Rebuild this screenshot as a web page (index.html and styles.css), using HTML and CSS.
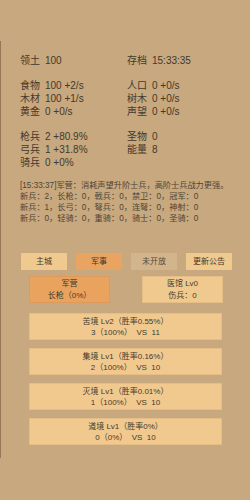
FILE: index.html
```html
<!DOCTYPE html>
<html lang="zh">
<head>
<meta charset="utf-8">
<title>领土</title>
<link rel="stylesheet" href="styles.css">
</head>
<body>
<div class="panel">
  <div class="stats group-first">
    <div class="stat"><span class="lbl">领土</span><span>100</span></div>
    <div class="stat"><span class="lbl">存档</span><span>15:33:35</span></div>
  </div>
  <div class="stats group">
    <div class="stat"><span class="lbl">食物</span><span>100 +2/s</span></div>
    <div class="stat"><span class="lbl">人口</span><span>0 +0/s</span></div>
    <div class="stat"><span class="lbl">木材</span><span>100 +1/s</span></div>
    <div class="stat"><span class="lbl">树木</span><span>0 +0/s</span></div>
    <div class="stat"><span class="lbl">黄金</span><span>0 +0/s</span></div>
    <div class="stat"><span class="lbl">声望</span><span>0 +0/s</span></div>
  </div>
  <div class="stats group">
    <div class="stat"><span class="lbl">枪兵</span><span>2 +80.9%</span></div>
    <div class="stat"><span class="lbl">圣物</span><span>0</span></div>
    <div class="stat"><span class="lbl">弓兵</span><span>1 +31.8%</span></div>
    <div class="stat"><span class="lbl">能量</span><span>8</span></div>
    <div class="stat"><span class="lbl">骑兵</span><span>0 +0%</span></div>
  </div>
  <div class="log">
    <div>[15:33:37]军营：消耗声望升阶士兵，高阶士兵战力更强。</div>
    <div>新兵：2，长枪：0，戟兵：0，禁卫：0，冠军：0</div>
    <div>新兵：1，长弓：0，弩兵：0，连弩：0，神射：0</div>
    <div>新兵：0，轻骑：0，重骑：0，骑士：0，圣骑：0</div>
  </div>
  <div class="tabs">
    <div class="tab">主城</div>
    <div class="tab active">军事</div>
    <div class="tab disabled">未开放</div>
    <div class="tab">更新公告</div>
  </div>
  <div class="buildings">
    <div class="bld active"><div>军营</div><div>长枪（0%）</div></div>
    <div class="bld"><div>医馆 Lv0</div><div>伤兵：0</div></div>
  </div>
  <div class="cards">
    <div class="card"><div>苦境 Lv2（胜率0.55%）</div><div>3（100%）  VS  11</div></div>
    <div class="card"><div>集境 Lv1（胜率0.16%）</div><div>2（100%）  VS  10</div></div>
    <div class="card"><div>灭境 Lv1（胜率0.01%）</div><div>1（100%）  VS  10</div></div>
    <div class="card"><div>道境 Lv1（胜率0%）</div><div>0（0%）  VS  10</div></div>
  </div>
</div>
</body>
</html>
```

FILE: styles.css
```css
html, body {
  margin: 0;
  padding: 0;
  background: #c8a87e;
}
body {
  width: 250px;
  height: 500px;
  overflow: hidden;
  font-family: "Liberation Sans", "Noto Sans CJK TC", "Noto Sans CJK SC", sans-serif;
  color: #43392d;
  text-spacing-trim: space-all;
}
.panel {
  margin-top: 41px;
  height: 417px;
  border-left: 1px solid #947859;
  box-sizing: border-box;
  padding-top: 13px;
}
.stats {
  display: grid;
  grid-template-columns: 107px 107px;
  padding-left: 19px;
  font-size: 10px;
  line-height: 13px;
}
.group {
  margin-top: 12px;
}
.stat {
  display: flex;
  gap: 5px;
  white-space: nowrap;
}
.log {
  margin-top: 11px;
  padding-left: 19px;
  font-size: 8.2px;
  line-height: 11px;
  color: #4f4436;
  white-space: nowrap;
}
.tabs {
  display: flex;
  gap: 9px;
  margin-top: 29px;
  padding-left: 20px;
}
.tab {
  width: 46px;
  height: 17px;
  line-height: 17px;
  text-align: center;
  font-size: 8px;
  background: #f0c98f;
  color: #43392d;
}
.tab.active {
  background: #e9a461;
}
.tab.disabled {
  background: #d2b58c;
  color: #554a3c;
}
.buildings {
  display: flex;
  gap: 32px;
  margin-top: 6px;
  padding-left: 28px;
}
.bld {
  width: 81px;
  height: 27px;
  box-sizing: border-box;
  display: flex;
  flex-direction: column;
  justify-content: center;
  align-items: center;
  font-size: 8px;
  line-height: 12px;
  background: #f0c98f;
  border: 1px solid #e6bd86;
  white-space: pre;
}
.bld.active {
  background: #e9a35e;
  border-color: #dd9a5a;
}
.cards {
  display: flex;
  flex-direction: column;
  gap: 8px;
  margin-top: 10px;
  padding-left: 28px;
}
.card {
  width: 193px;
  height: 27px;
  box-sizing: border-box;
  display: flex;
  flex-direction: column;
  justify-content: center;
  align-items: center;
  font-size: 8px;
  line-height: 11px;
  background: #f1c98f;
  border: 1px solid #e6bd86;
  white-space: pre;
}
```
